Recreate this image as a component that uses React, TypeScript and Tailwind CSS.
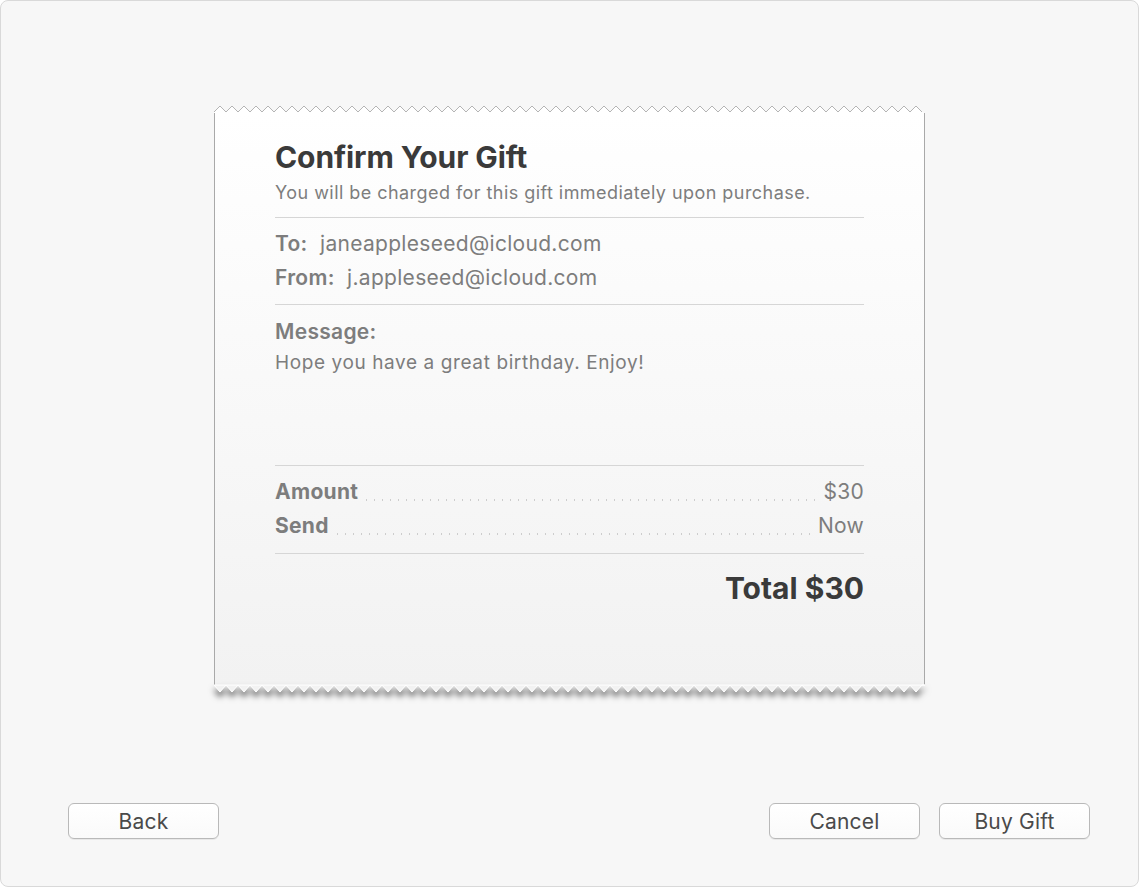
import React from 'react'

const W = 711
const PERIOD = 12

const zigzag = (h: number, top: boolean) => {
  const pts: string[] = []
  for (let x = 0; x <= W; x += PERIOD / 2) {
    const up = (x / (PERIOD / 2)) % 2 === 0
    pts.push(`${x},${top ? (up ? h : 1) : up ? 0 : h - 1}`)
  }
  return pts
}

const TopEdge = () => {
  const pts = zigzag(7, true)
  return (
    <svg width={W} height={8} className="block">
      <polygon points={`0,8 ${pts.join(' ')} ${W},8`} fill="#ffffff" />
      <polyline points={pts.join(' ')} fill="none" stroke="#b4b4b4" strokeWidth="1" />
    </svg>
  )
}

const BottomEdge = () => {
  const pts = zigzag(8, false)
  return (
    <svg width={W} height={16} className="block overflow-visible drop-shadow-[0_5px_3px_rgba(0,0,0,0.6)]">
      <polygon points={`0,0 ${W},0 ${pts.slice().reverse().join(' ')}`} fill="#f2f2f2" stroke="#ffffff" strokeWidth="1" />
    </svg>
  )
}

const Leader = () => (
  <div className="mx-2 mb-[8px] h-[2px] flex-1 self-end bg-[linear-gradient(to_right,#cdcdcd_1px,transparent_1px)] bg-[length:8px_2px] bg-repeat-x" />
)

const Button = ({ label }: { label: string }) => (
  <button className="h-[36px] w-[151px] rounded-[6px] border border-[#b9b9b9] bg-gradient-to-b from-white to-[#fafafa] pt-[2px] text-[21px] tracking-[0.2px] text-[#4a4a4a] shadow-[0_1px_0_rgba(0,0,0,0.06)]">
    {label}
  </button>
)

export default function App() {
  return (
    <div className="flex h-[887px] w-[1139px] flex-col rounded-[8px] border border-[#d9d9d9] bg-[#f7f7f7] font-['Inter',sans-serif]">
      <div className="mx-auto mt-[104px] w-[711px]">
        <TopEdge />
        <div className="h-[572px] border-x-[1.5px] border-[#a9a9a9] bg-gradient-to-b from-white to-[#f2f2f2] pl-[60px] pr-[60px] pt-[27px]">
          <h1 className="text-[30px] font-bold leading-[34px] tracking-[-0.1px] text-[#3a3a3a]">Confirm Your Gift</h1>
          <p className="mt-[8px] text-[18px] leading-[22px] tracking-[0.45px] text-[#7d7d7d]">
            You will be charged for this gift immediately upon purchase.
          </p>
          <div className="mt-[13px] border-t border-[#d6d6d6]" />
          <div className="pt-[9px] text-[21px] leading-[34px] tracking-[0.3px] text-[#7d7d7d]">
            <div>
              <span className="font-semibold">To:</span>&nbsp; janeappleseed@icloud.com
            </div>
            <div>
              <span className="font-semibold">From:</span>&nbsp; j.appleseed@icloud.com
            </div>
          </div>
          <div className="mt-[9px] border-t border-[#d6d6d6]" />
          <div className="pt-[14px] text-[#7d7d7d]">
            <div className="text-[21px] font-semibold leading-[26px] tracking-[0.3px]">Message:</div>
            <div className="mt-[5px] text-[19px] leading-[26px] tracking-[0.6px]">Hope you have a great birthday. Enjoy!</div>
          </div>
          <div className="mt-[89px] border-t border-[#d6d6d6]" />
          <div className="pt-[9px] text-[21px] leading-[34px] tracking-[0.3px] text-[#7d7d7d]">
            <div className="flex">
              <span className="font-bold">Amount</span>
              <Leader />
              <span>$30</span>
            </div>
            <div className="flex">
              <span className="font-bold">Send</span>
              <Leader />
              <span>Now</span>
            </div>
          </div>
          <div className="mt-[10px] border-t border-[#d6d6d6]" />
          <div className="pt-[16px] text-right text-[30px] font-bold leading-[36px] text-[#3a3a3a]">Total $30</div>
        </div>
        <BottomEdge />
      </div>
      <div className="flex-1" />
      <div className="mb-[47px] flex items-center pl-[67px] pr-[48px]">
        <Button label="Back" />
        <div className="flex-1" />
        <div className="flex gap-[19px]">
          <Button label="Cancel" />
          <Button label="Buy Gift" />
        </div>
      </div>
    </div>
  )
}
